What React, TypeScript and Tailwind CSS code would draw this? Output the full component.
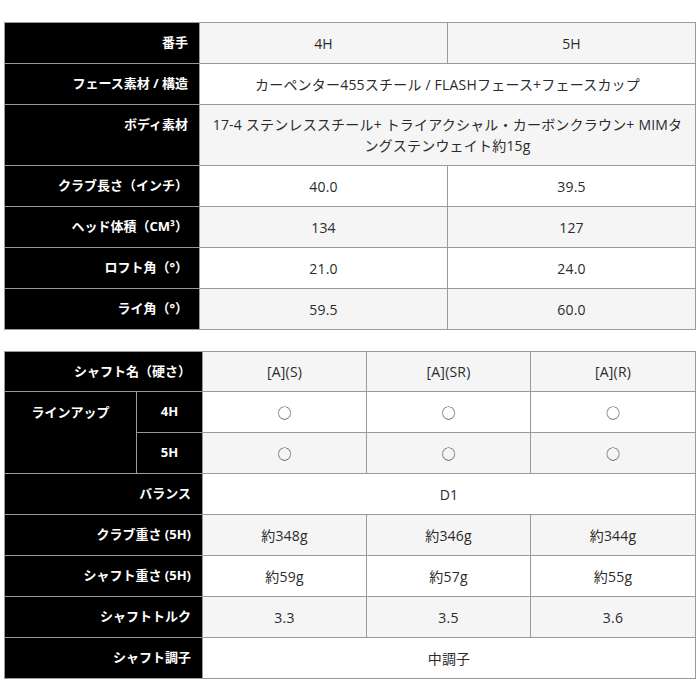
const FONT = 'font-["Open_Sans","Noto_Sans_CJK_JP",sans-serif]'

const th = 'bg-black text-white font-bold text-[13px] text-right pr-[11px] border border-[#9a9a9a] align-middle'
const td = 'text-[#2b2b2b] text-[14px] tracking-[0.2px] text-center border border-[#9a9a9a] align-middle'

function Mark() {
  return <span className='font-["Noto_Sans_CJK_JP",sans-serif] text-[14px] text-[#333]'>○</span>
}

function Spec() {
  const rows: { label: string; cells: string[]; tall?: boolean }[] = [
    { label: '番手', cells: ['4H', '5H'] },
    { label: 'フェース素材 / 構造', cells: ['カーペンター455スチール / FLASHフェース+フェースカップ'] },
    {
      label: 'ボディ素材',
      cells: ['17-4 ステンレススチール+ トライアクシャル・カーボンクラウン+ MIMタングステンウェイト約15g'],
      tall: true,
    },
    { label: 'クラブ長さ（インチ）', cells: ['40.0', '39.5'] },
    { label: 'ヘッド体積（CM³）', cells: ['134', '127'] },
    { label: 'ロフト角（°）', cells: ['21.0', '24.0'] },
    { label: 'ライ角（°）', cells: ['59.5', '60.0'] },
  ]
  return (
    <table className="table-fixed border-collapse w-[691px]">
      <colgroup>
        <col className="w-[195px]" />
        <col className="w-[248px]" />
        <col className="w-[248px]" />
      </colgroup>
      <tbody>
        {rows.map((r, i) => (
          <tr key={r.label} className={i % 2 === 0 ? 'bg-[#f5f5f5]' : 'bg-white'}>
            <th className={`${th} ${r.tall ? 'h-[61px] align-top pt-[10px]' : 'h-[41px]'}`}>{r.label}</th>
            {r.cells.length === 1 ? (
              <td colSpan={2} className={`${td} ${r.tall ? 'align-top pt-[9px] px-[10px] leading-[21px]' : ''}`}>
                {r.cells[0]}
              </td>
            ) : (
              r.cells.map((c, j) => (
                <td key={j} className={td}>
                  {c}
                </td>
              ))
            )}
          </tr>
        ))}
      </tbody>
    </table>
  )
}

function Shaft() {
  const rows: { label: string; cells: string[] }[] = [
    { label: 'バランス', cells: ['D1'] },
    { label: 'クラブ重さ (5H)', cells: ['約348g', '約346g', '約344g'] },
    { label: 'シャフト重さ (5H)', cells: ['約59g', '約57g', '約55g'] },
    { label: 'シャフトトルク', cells: ['3.3', '3.5', '3.6'] },
    { label: 'シャフト調子', cells: ['中調子'] },
  ]
  const sub = 'bg-black text-white font-bold text-[13px] text-center border border-[#9a9a9a]'
  return (
    <table className="table-fixed border-collapse w-[691px]">
      <colgroup>
        <col className="w-[132px]" />
        <col className="w-[66px]" />
        <col className="w-[164px]" />
        <col className="w-[164px]" />
        <col className="w-[165px]" />
      </colgroup>
      <tbody>
        <tr className="bg-[#f5f5f5]">
          <th colSpan={2} className={`${th} h-[40px]`}>
            シャフト名（硬さ）
          </th>
          <td className={td}>[A](S)</td>
          <td className={td}>[A](SR)</td>
          <td className={td}>[A](R)</td>
        </tr>
        <tr className="bg-white">
          <th rowSpan={2} className={`${sub} align-top pt-[11px]`}>
            ラインアップ
          </th>
          <th className={`${sub} h-[41px]`}>4H</th>
          {[0, 1, 2].map((k) => (
            <td key={k} className={td}>
              <Mark />
            </td>
          ))}
        </tr>
        <tr className="bg-[#f5f5f5]">
          <th className={`${sub} h-[41px]`}>5H</th>
          {[0, 1, 2].map((k) => (
            <td key={k} className={td}>
              <Mark />
            </td>
          ))}
        </tr>
        {rows.map((r, i) => (
          <tr key={r.label} className={i % 2 === 0 ? 'bg-white' : 'bg-[#f5f5f5]'}>
            <th colSpan={2} className={`${th} h-[41px]`}>
              {r.label}
            </th>
            {r.cells.length === 1 ? (
              <td colSpan={3} className={td}>
                {r.cells[0]}
              </td>
            ) : (
              r.cells.map((c, j) => (
                <td key={j} className={td}>
                  {c}
                </td>
              ))
            )}
          </tr>
        ))}
      </tbody>
    </table>
  )
}

export default function App() {
  return (
    <div className={`${FONT} bg-white w-[700px] h-[700px] pt-[22px] pl-[4px] flex flex-col gap-[21px]`}>
      <Spec />
      <Shaft />
    </div>
  )
}
